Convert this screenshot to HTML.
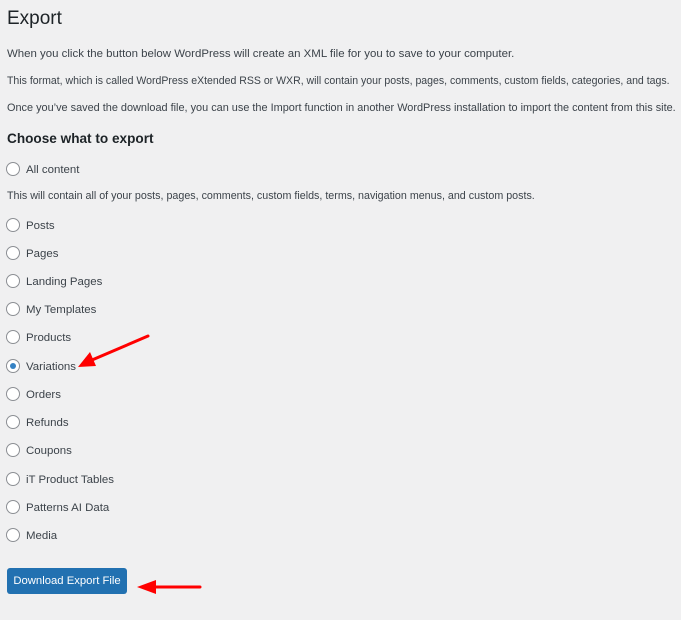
<!DOCTYPE html>
<html><head><style>
body{margin:0;background:#f0f0f1;width:681px;height:620px;overflow:hidden;font-family:"Liberation Sans",sans-serif;color:#3c434a;font-size:11.45px;position:relative}
.a{position:absolute;white-space:nowrap;line-height:14px;transform-origin:0 0}
h1{position:absolute;left:7px;top:8px;margin:0;font-weight:400;font-size:19px;color:#1d2327}
h2{position:absolute;left:7px;top:131px;margin:0;font-weight:600;font-size:13.6px;color:#1d2327}
.r{position:absolute;left:6px;width:12px;height:12px;border:1px solid #8c8f94;border-radius:50%;background:#fff}
.r.on::after{content:"";position:absolute;left:3px;top:3px;width:6px;height:6px;border-radius:50%;background:#3582c4}
.l{margin-top:1px}
.btn{position:absolute;left:7px;top:568px;width:120px;height:26px;background:#2271b1;border-radius:3px;color:#fff;font-size:11.3px;line-height:26px;text-align:center}
</style></head><body>
<h1>Export</h1>
<div class="a" style="left:7px;top:47px">When you click the button below WordPress will create an XML file for you to save to your computer.</div>
<div class="a" style="left:7px;top:74px;transform:scaleX(0.921)">This format, which is called WordPress eXtended RSS or WXR, will contain your posts, pages, comments, custom fields, categories, and tags.</div>
<div class="a" style="left:7px;top:101px;transform:scaleX(0.953)">Once you’ve saved the download file, you can use the Import function in another WordPress installation to import the content from this site.</div>
<h2>Choose what to export</h2>
<div class="r" style="top:162px"></div><div class="a l" style="left:26px;top:162px">All content</div>
<div class="a" style="left:7px;top:189px;transform:scaleX(0.936)">This will contain all of your posts, pages, comments, custom fields, terms, navigation menus, and custom posts.</div>
<div class="r" style="top:218px"></div><div class="a l" style="left:26px;top:218px">Posts</div>
<div class="r" style="top:246px"></div><div class="a l" style="left:26px;top:246px">Pages</div>
<div class="r" style="top:274px"></div><div class="a l" style="left:26px;top:274px">Landing Pages</div>
<div class="r" style="top:302px"></div><div class="a l" style="left:26px;top:302px">My Templates</div>
<div class="r" style="top:330px"></div><div class="a l" style="left:26px;top:330px">Products</div>
<div class="r on" style="top:359px"></div><div class="a l" style="left:26px;top:359px">Variations</div>
<div class="r" style="top:387px"></div><div class="a l" style="left:26px;top:387px">Orders</div>
<div class="r" style="top:415px"></div><div class="a l" style="left:26px;top:415px">Refunds</div>
<div class="r" style="top:443px"></div><div class="a l" style="left:26px;top:443px">Coupons</div>
<div class="r" style="top:472px"></div><div class="a l" style="left:26px;top:472px">iT Product Tables</div>
<div class="r" style="top:500px"></div><div class="a l" style="left:26px;top:500px">Patterns AI Data</div>
<div class="r" style="top:528px"></div><div class="a l" style="left:26px;top:528px">Media</div>
<div class="btn">Download Export File</div>
<svg width="681" height="620" style="position:absolute;left:0;top:0">
<line x1="148" y1="336" x2="92" y2="360" stroke="#f00" stroke-width="3" stroke-linecap="round"/>
<polygon points="78,367 90,352 96,366" fill="#f00"/>
<line x1="200" y1="587" x2="150" y2="587" stroke="#f00" stroke-width="3" stroke-linecap="round"/>
<polygon points="137,587 156,580 156,594" fill="#f00"/>
</svg>
</body></html>
